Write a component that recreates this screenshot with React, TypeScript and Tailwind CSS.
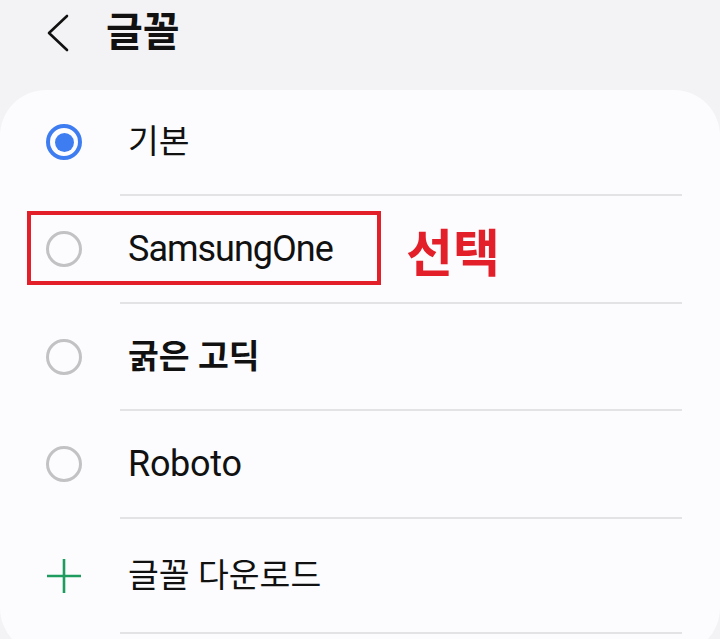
import React from "react";

const font = { fontFamily: 'Roboto, "Noto Sans CJK KR", sans-serif' };

function Radio({ checked }: { checked?: boolean }) {
  return checked ? (
    <div className="w-[36px] h-[36px] rounded-full border-[4px] border-[#3e7cf1] flex items-center justify-center">
      <div className="w-[19px] h-[19px] rounded-full bg-[#3e7cf1]" />
    </div>
  ) : (
    <div className="w-[36px] h-[36px] rounded-full border-[3px] border-[#c2c2c4]" />
  );
}

function Sep() {
  return <div className="ml-[120px] mr-[38px] h-[2px] bg-[#e3e3e5]" />;
}

export default function App() {
  return (
    <div className="w-[720px] h-[639px] bg-[#f3f3f5] overflow-hidden" style={font}>
      <div className="h-[90px] flex items-center pb-[24px]">
        <svg width="30" height="40" viewBox="0 0 30 40" className="ml-[43px]">
          <path d="M24 3 L6 20 L24 37" fill="none" stroke="#111" strokeWidth="2.6" strokeLinecap="round" strokeLinejoin="round" />
        </svg>
        <div className="ml-[33px] text-[40px] font-bold text-[#111] leading-none">글꼴</div>
      </div>
      <div className="bg-[#fcfcfe] rounded-[46px]">
        <div className="h-[104px] flex items-center">
          <div className="w-[128px] pl-[46px]"><Radio checked /></div>
          <span className="text-[33.5px] text-[#111] leading-none">기본</span>
        </div>
        <Sep />
        <div className="h-[106px] flex items-center relative">
          <div className="w-[128px] pl-[46px]"><Radio /></div>
          <span className="text-[36px] text-[#111] leading-none tracking-[-1px]">SamsungOne</span>
          <div className="absolute left-[27px] top-[15px] w-[354px] h-[74px] border-[4px] border-[#e3202a]" />
          <span className="absolute left-[406px] top-[33px] text-[51px] font-bold text-[#e3202a] leading-none">선택</span>
        </div>
        <Sep />
        <div className="h-[105px] flex items-center">
          <div className="w-[128px] pl-[46px]"><Radio /></div>
          <span className="text-[33.5px] font-bold text-[#111] leading-none">굵은 고딕</span>
        </div>
        <Sep />
        <div className="h-[106px] flex items-center">
          <div className="w-[128px] pl-[46px]"><Radio /></div>
          <span className="text-[36px] text-[#111] leading-none tracking-[-0.3px]">Roboto</span>
        </div>
        <Sep />
        <div className="h-[113px] flex items-center">
          <div className="w-[128px] pl-[46px]">
            <svg width="36" height="36" viewBox="0 0 36 36">
              <path d="M18 1 V35 M1 18 H35" stroke="#1e9b5e" strokeWidth="2.6" />
            </svg>
          </div>
          <span className="text-[33.5px] text-[#111] leading-none">글꼴 다운로드</span>
        </div>
        <Sep />
        <div className="h-[20px]" />
      </div>
    </div>
  );
}
